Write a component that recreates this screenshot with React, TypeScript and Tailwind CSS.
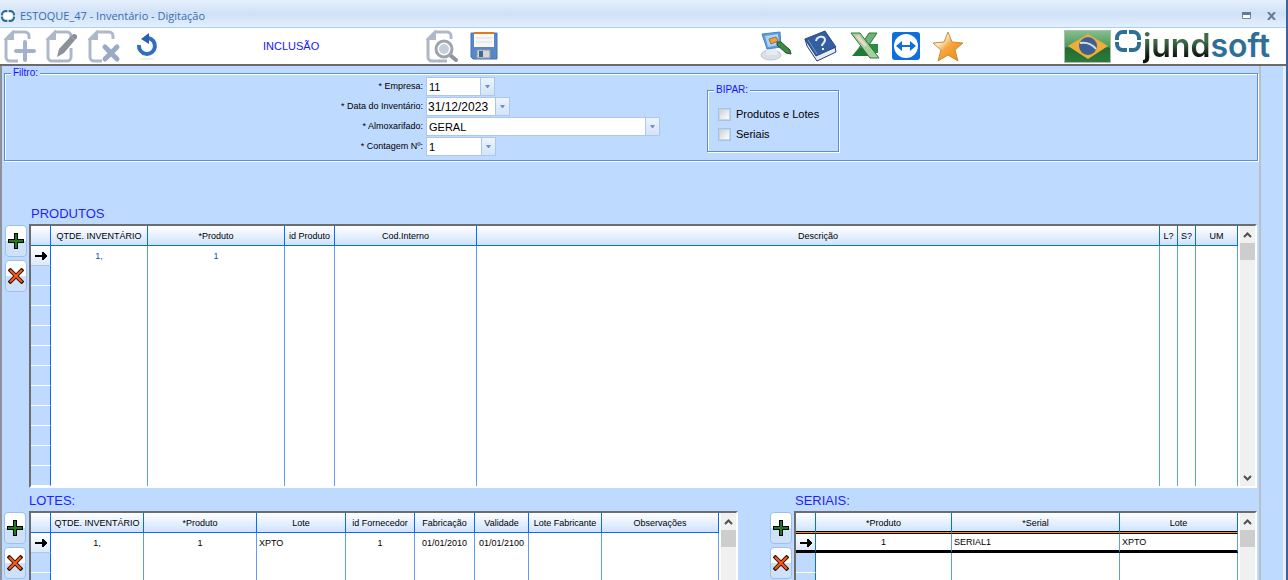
import React from "react";
import clsx from "clsx";

type Column = {
  label: string;
  width?: string;
};

type Cell = {
  text: string;
  align?: string;
};

const produtoColumns: Column[] = [
  { label: "QTDE. INVENTÁRIO", width: "w-[97px]" },
  { label: "*Produto", width: "w-[137px]" },
  { label: "id Produto", width: "w-[50px]" },
  { label: "Cod.Interno", width: "w-[142px]" },
  { label: "Descrição" },
  { label: "L?", width: "w-[18px]" },
  { label: "S?", width: "w-[18px]" },
  { label: "UM", width: "w-[42px]" },
];

const produtoRow: Cell[] = [
  { text: "1,", align: "text-center text-[#0a4fb4]" },
  { text: "1", align: "text-center text-[#0a4fb4]" },
  { text: "" },
  { text: "" },
  { text: "" },
  { text: "" },
  { text: "" },
  { text: "" },
];

const loteColumns: Column[] = [
  { label: "QTDE. INVENTÁRIO", width: "w-[93px]" },
  { label: "*Produto", width: "w-[113px]" },
  { label: "Lote", width: "w-[89px]" },
  { label: "id Fornecedor", width: "w-[69px]" },
  { label: "Fabricação", width: "w-[60px]" },
  { label: "Validade", width: "w-[54px]" },
  { label: "Lote Fabricante", width: "w-[73px]" },
  { label: "Observações" },
];

const loteRow: Cell[] = [
  { text: "1,", align: "text-center" },
  { text: "1", align: "text-center" },
  { text: "XPTO", align: "text-left pl-0.5" },
  { text: "1", align: "text-center" },
  { text: "01/01/2010", align: "text-center" },
  { text: "01/01/2100", align: "text-center" },
  { text: "" },
  { text: "" },
];

const serialColumns: Column[] = [
  { label: "*Produto", width: "w-[136px]" },
  { label: "*Serial", width: "w-[168px]" },
  { label: "Lote" },
];

const serialRow: Cell[] = [
  { text: "1", align: "text-center" },
  { text: "SERIAL1", align: "text-left pl-0.5" },
  { text: "XPTO", align: "text-left pl-0.5" },
];

/* ---------- Icons ---------- */

const PageShape = () => (
  <>
    <path d="M10 3h12a4 4 0 0 1 4 4v3M3 10v18a4 4 0 0 0 4 4h8" fill="none" stroke="#adb8ca" strokeWidth="3" />
    <path d="M11 1v10H1v-1l9-9z" fill="#adb8ca" />
  </>
);

const NewIcon = () => (
  <svg width="34" height="34" viewBox="0 0 34 34">
    <PageShape />
    <path d="M22 13v18M13 22h18" stroke="#a3b2ca" strokeWidth="4" strokeLinecap="round" />
  </svg>
);

const EditIcon = () => (
  <svg width="34" height="34" viewBox="0 0 34 34">
    <PageShape />
    <path d="M14 32h8a4 4 0 0 0 4-4v-9" fill="none" stroke="#adb8ca" strokeWidth="3" />
    <path d="M12 28l2-8L26 7l4 4-11 13z" fill="#8c9098" />
    <path d="M27 6c2-2 6-1 5 3l-2 2-4-4z" fill="#8c9098" />
  </svg>
);

const DeleteIcon = () => (
  <svg width="34" height="34" viewBox="0 0 34 34">
    <PageShape />
    <path d="M18 18l12 12M30 18L18 30" stroke="#9aaac4" strokeWidth="5" strokeLinecap="round" />
  </svg>
);

const UndoIcon = () => (
  <svg width="24" height="28" viewBox="0 0 24 28">
    <ellipse cx="12" cy="27" rx="8" ry="1" fill="#efefef" />
    <path d="M4 13a8 8 0 1 0 9-7" fill="none" stroke="#2f6fbe" strokeWidth="4" />
    <path d="M6 7l8-6v11z" fill="#2861ad" />
  </svg>
);

const SearchIcon = () => (
  <svg width="34" height="34" viewBox="0 0 34 34">
    <PageShape />
    <path d="M14 32h8" stroke="#adb8ca" strokeWidth="3" />
    <path d="M25 26l6 5" stroke="#8f959f" strokeWidth="4" strokeLinecap="round" />
    <circle cx="19" cy="20" r="8" fill="#fff" stroke="#9ea4ad" strokeWidth="3" />
    <circle cx="19" cy="20" r="5" fill="#c5ced9" />
  </svg>
);

const SaveIcon = () => (
  <svg width="28" height="28" viewBox="0 0 28 28">
    <path d="M1 1h26v26H3l-2-2z" fill="#5787c9" stroke="#4673b2" />
    <path d="M4 1h20v14H4z" fill="#f7f7f7" />
    <path d="M4 0h20v2H4z" fill="#e07a1c" />
    <path d="M6 6h16M6 10h16" stroke="#d8dde5" />
    <path d="M7 18h13v8H7z" fill="#d7d7cf" stroke="#8d9aa8" />
    <path d="M9 19h4v6H9z" fill="#3c67a2" />
  </svg>
);

const MonitorIcon = () => (
  <svg width="32" height="30" viewBox="0 0 32 30">
    <ellipse cx="11" cy="24" rx="10" ry="5" fill="#d9dfe6" stroke="#c0c7cf" />
    <path d="M7 17h9l2 7H6z" fill="#e6ebf0" />
    <path d="M2 3l18-2 1 15-14 2z" fill="#5a9be2" stroke="#4b82c6" />
    <path d="M5 5l13-2 1 11-11 2z" fill="#a9d3fa" />
    <path d="M9 8l7-2 2 4-7 3z" fill="#eda23a" stroke="#a5702c" />
    <path d="M17 11l4 0 9 8 1 4-5-1-9-8z" fill="#3d8a45" stroke="#1e5427" />
  </svg>
);

const BookIcon = () => (
  <svg width="34" height="32" viewBox="0 0 34 32">
    <path d="M1 9l11 16 19-8 1 5-19 9L3 16z" fill="#e7ebf2" stroke="#263f6e" />
    <path d="M1 9L21 1l11 16-20 9z" fill="#345f9f" stroke="#2a4c84" />
    <path d="M4 10l9 14" stroke="#7597cb" />
    <path d="M12 11c1-5 9-6 9-1 0 3-3 3-3 6M19 18v2" fill="none" stroke="#e6eefa" strokeWidth="2" />
  </svg>
);

const SheetIcon = () => (
  <svg width="30" height="28" viewBox="0 0 30 28">
    <path d="M12 12h6v12H2z" fill="#1f7a33" />
    <path d="M17 12h11v9H20z" fill="#2c8d3f" />
    <path d="M27 1h-8L9 16h8z" fill="#6fb277" stroke="#2b7a39" />
    <path d="M1 1h9l19 25h-9z" fill="#a7cfa2" stroke="#2b7a39" />
    <path d="M7 4l9 10" stroke="#efd9c6" strokeWidth="3" />
  </svg>
);

const RemoteIcon = () => (
  <svg width="28" height="28" viewBox="0 0 28 28">
    <rect width="28" height="28" rx="3" fill="#0e6fde" />
    <circle cx="14" cy="14" r="12" fill="#fff" />
    <path d="M4 14l6-5v4h8V9l6 5-6 5v-4h-8v4z" fill="#0e6fde" />
  </svg>
);

const StarIcon = () => (
  <svg width="32" height="31" viewBox="0 0 32 31">
    <defs>
      <linearGradient id="star" x1="0" y1="0" x2="1" y2="1">
        <stop offset="0.3" stopColor="#f4ead2" />
        <stop offset="0.5" stopColor="#f7a43a" />
        <stop offset="1" stopColor="#ef8412" />
      </linearGradient>
    </defs>
    <path d="M16 1l4 10 11 1-8 7 3 11-10-6-10 6 3-11-8-7 11-1z" fill="url(#star)" stroke="#c98d3b" />
  </svg>
);

const FlagIcon = () => (
  <svg width="47" height="33" viewBox="0 0 47 33">
    <defs>
      <linearGradient id="flag" x1="0" y1="0" x2="0" y2="1">
        <stop offset="0" stopColor="#86bf8f" />
        <stop offset="0.5" stopColor="#4d9a5b" />
        <stop offset="0.55" stopColor="#226c32" />
        <stop offset="1" stopColor="#2d7a3b" />
      </linearGradient>
    </defs>
    <rect x="0.5" y="0.5" width="46" height="32" fill="url(#flag)" stroke="#a9bcae" />
    <path d="M4 16L24 4l20 12-20 13z" fill="#f0ad3a" />
    <circle cx="24" cy="16" r="9" fill="#3d5f92" />
    <path d="M16 13c6-1 12 1 16 6" fill="none" stroke="#d4dcea" strokeWidth="2" />
  </svg>
);

const BrandMark = ({ className }: { className: string }) => (
  <svg className={className} viewBox="0 0 26 22">
    <path
      d="M12 2H8a6 6 0 0 0-6 6v2M14 2h4a6 6 0 0 1 6 6v2M2 12v2a6 6 0 0 0 6 6h4M24 12v2a6 6 0 0 1-6 6h-4"
      fill="none"
      stroke="#2f6f97"
      strokeWidth="4"
    />
  </svg>
);

const PlusIcon = () => (
  <svg width="16" height="16" viewBox="0 0 16 16" shapeRendering="crispEdges">
    <path d="M6 0h4v6h6v4h-6v6H6v-6H0V6h6z" fill="#000" />
    <path d="M7 1h2v6h6v2H9v6H7V9H1V7h6z" fill="#1d7a1d" />
  </svg>
);

const CrossIcon = () => (
  <svg width="16" height="16" viewBox="0 0 16 16">
    <path d="M1 1l14 14M15 1L1 15" stroke="#2a1408" strokeWidth="4" />
    <path d="M2 2l12 12M14 2L2 14" stroke="#ff5a14" strokeWidth="2" />
  </svg>
);

const RowArrow = () => (
  <svg className="mx-auto block" width="12" height="9" viewBox="0 0 12 9" shapeRendering="crispEdges">
    <path d="M0 4h9v2H0zM7 1h2v8H7zM9 2h1v6H9zM10 3h1v4h-1zM11 4h1v2h-1z" fill="#000" />
  </svg>
);

/* ---------- Building blocks ---------- */

const ToolButton = ({ label, children }: { label: string; children: React.ReactNode }) => (
  <button type="button" aria-label={label} className="flex shrink-0 items-center justify-center">
    {children}
  </button>
);

const DropArrow = () => (
  <svg width="5" height="3" viewBox="0 0 5 3">
    <path d="M0 0h5L3 3H2z" fill="#6d92c4" />
  </svg>
);

const fieldBox = "flex h-[19px] border border-[#abc7ec] bg-white";
const dropBox =
  "pointer-events-none flex w-[14px] shrink-0 items-center justify-center border-l border-[#abc7ec] bg-linear-to-b from-[#edf4fd] to-[#d3e3f8]";

const SelectField = ({ id, label, value, width }: { id: string; label: string; value: string; width: string }) => (
  <>
    <label htmlFor={id} className="text-right leading-[19px]">
      {label}
    </label>
    <div className={clsx(fieldBox, width)}>
      <select id={id} className="min-w-0 flex-1 appearance-none pl-0.5 text-[11px] leading-4">
        <option>{value}</option>
      </select>
      <span className={dropBox}>
        <DropArrow />
      </span>
    </div>
  </>
);

const SideButtons = () => (
  <div className="mt-px flex w-[22px] shrink-0 flex-col gap-[3px]">
    {["Adicionar", "Excluir"].map((label, i) => (
      <button
        key={label}
        type="button"
        aria-label={label}
        className="flex h-8 items-center justify-center rounded-sm border border-[#9dc0ee] bg-linear-to-b from-white from-50% to-[#cfe1f8] to-50%"
      >
        {i === 0 ? <PlusIcon /> : <CrossIcon />}
      </button>
    ))}
  </div>
);

const Chevron = ({ down }: { down?: boolean }) => (
  <svg width="9" height="6" viewBox="0 0 9 6" className={clsx(down && "rotate-180")}>
    <path d="M1 5l3.5-3.5L8 5" fill="none" stroke="#505050" strokeWidth="2" />
  </svg>
);

type GridProps = {
  columns: Column[];
  row: Cell[];
  emptyRows: number;
  headerClass?: string;
  rowClass?: string;
};

const DataGrid = ({
  columns,
  row,
  emptyRows,
  headerClass = "border-b-[#0a6cf0]",
  rowClass,
}: GridProps) => (
  <div className="flex min-w-0 flex-1 overflow-hidden border-2 border-t-[#6d6d6d] border-r-white border-b-white border-l-[#6d6d6d] bg-white">
    <table className="w-full table-fixed border-separate border-spacing-0 self-start">
      <thead>
        <tr className="h-5">
          <th
            className={clsx(
              "w-5 border-r border-b border-r-[#0a6cf0] bg-linear-to-b from-white to-[#cfe2fb] p-0",
              headerClass
            )}
          />
          {columns.map((col) => (
            <th
              key={col.label}
              className={clsx(
                "border-r border-b border-r-[#0a6cf0] bg-linear-to-b from-white to-[#cfe2fb] p-0 text-center font-normal whitespace-nowrap",
                col.width,
                headerClass
              )}
            >
              {col.label}
            </th>
          ))}
        </tr>
      </thead>
      <tbody>
        <tr className="h-5">
          <td
            className={clsx(
              "border-r border-r-[#0a6cf0] bg-linear-to-b from-white to-[#dbe9fc] p-0",
              rowClass ?? "border-b border-b-[#abc7ec]"
            )}
          >
            <RowArrow />
          </td>
          {row.map((cell, i) => (
            <td
              key={i}
              className={clsx("border-r border-r-[#5b9df5] p-0 whitespace-nowrap", cell.align, rowClass)}
            >
              {cell.text}
            </td>
          ))}
        </tr>
        {Array.from({ length: emptyRows }, (_, r) => (
          <tr key={r} className="h-5">
            <td className="border-r border-b border-r-[#0a6cf0] border-b-white bg-[#bfdaff] p-0" />
            {columns.map((col) => (
              <td key={col.label} className="border-r border-r-[#5b9df5] p-0" />
            ))}
          </tr>
        ))}
      </tbody>
    </table>
    <div className="ml-0.5 flex w-[15px] shrink-0 flex-col items-center bg-[#f0f0f0]">
      <span className="flex h-[17px] items-center">
        <Chevron />
      </span>
      <span className="h-[17px] w-full bg-[#cdcdcd]" />
      <span className="mt-auto flex h-[17px] items-center">
        <Chevron down />
      </span>
    </div>
  </div>
);

const groupBox = "border border-[#5b8fd0] shadow-[1px_1px_0_#fff,inset_1px_1px_0_#fff]";
const sectionTitle = "text-[13px] leading-[26px] text-[#1f1fff]";

const Filtro = () => (
  <fieldset className={clsx("mt-px mr-px ml-0.5 h-[94px] shrink-0 pl-[310px]", groupBox)}>
    <legend className="-ml-[304px] bg-[#bfdaff] px-0.5 text-[10px] leading-3 text-[#1414ff]">Filtro:</legend>
    <div className="-mt-0.5 flex items-start">
      <div className="grid grid-cols-[108px_auto] gap-x-[3px] gap-y-px">
        <SelectField id="empresa" label="* Empresa:" value="11" width="w-[69px]" />
        <label htmlFor="data" className="text-right leading-[19px]">
          * Data do Inventário:
        </label>
        <div className={clsx(fieldBox, "w-[84px]")}>
          <input id="data" defaultValue="31/12/2023" className="min-w-0 flex-1 pl-px text-xs leading-4" />
          <span className={dropBox}>
            <DropArrow />
          </span>
        </div>
        <SelectField id="almoxarifado" label="* Almoxarifado:" value="GERAL" width="w-[234px]" />
        <SelectField id="contagem" label="* Contagem Nº:" value="1" width="w-[70px]" />
      </div>
      <fieldset className={clsx("mt-[7px] ml-[47px] h-[68px] w-[132px] px-2.5 pt-2", groupBox)}>
        <legend className="-ml-1 bg-[#bfdaff] px-0.5 text-[10px] leading-3 text-[#1414ff]">BIPAR:</legend>
        {["Produtos e Lotes", "Seriais"].map((label) => (
          <label key={label} className="flex h-5 items-center gap-[5px] text-[11px]">
            <input
              type="checkbox"
              className="size-[13px] appearance-none border-2 border-[#c3d3e8] bg-linear-to-br from-[#cdd2d8] to-white outline outline-[#a9c2e4] -outline-offset-1"
            />
            {label}
          </label>
        ))}
      </fieldset>
    </div>
  </fieldset>
);

const App = () => {
  return (
    <div className="flex h-screen flex-col overflow-hidden border-r-2 border-[#3c62a4] bg-[#bfdaff] font-['Liberation_Sans',Arial,sans-serif] text-[9px] leading-4 text-black">
      {/* Title bar */}
      <header className="flex h-[28px] shrink-0 items-center border-b border-[#a9d0f5] bg-linear-to-b from-[#e6f0fc] via-[#cfe1f7] to-[#e3effd] pt-1 pr-2.5">
        <span className="ml-px bg-white">
          <BrandMark className="h-3 w-3.5" />
        </span>
        <h1 className="ml-[5px] font-['Open_Sans',sans-serif] text-[11px] text-[#3a6cab]">
          ESTOQUE_47 - Inventário - Digitação
        </h1>
        <button type="button" aria-label="Restaurar" className="ml-auto">
          <svg width="9" height="8" viewBox="0 0 9 8">
            <path d="M0.5 0.5h8v6h-8z" fill="#fff" stroke="#6d87a8" />
            <path d="M0 0h9v3H0z" fill="#5f7a9e" />
          </svg>
        </button>
        <button type="button" aria-label="Fechar" className="ml-4">
          <svg width="9" height="8" viewBox="0 0 9 8">
            <path d="M1 0l7 8M8 0L1 8" stroke="#66799a" strokeWidth="2" />
          </svg>
        </button>
      </header>

      {/* Toolbar */}
      <div className="flex h-[38px] shrink-0 items-center border-b-2 border-[#6d6a6c] bg-white pl-[3px]">
        <div className="flex items-center gap-2">
          <ToolButton label="Novo"><NewIcon /></ToolButton>
          <ToolButton label="Editar"><EditIcon /></ToolButton>
          <ToolButton label="Excluir registro"><DeleteIcon /></ToolButton>
        </div>
        <div className="ml-3.5">
          <ToolButton label="Desfazer"><UndoIcon /></ToolButton>
        </div>
        <span className="ml-[104px] w-[162px] text-[11px] text-[#1414ff]">INCLUSÃO</span>
        <div className="flex items-center gap-[11px]">
          <ToolButton label="Pesquisar"><SearchIcon /></ToolButton>
          <ToolButton label="Salvar"><SaveIcon /></ToolButton>
        </div>
        <div className="ml-auto flex items-center gap-3">
          <ToolButton label="Aparência"><MonitorIcon /></ToolButton>
          <ToolButton label="Ajuda"><BookIcon /></ToolButton>
          <ToolButton label="Exportar planilha"><SheetIcon /></ToolButton>
          <ToolButton label="Acesso remoto"><RemoteIcon /></ToolButton>
          <ToolButton label="Favoritos"><StarIcon /></ToolButton>
        </div>
        <div className="ml-[100px] flex items-center pr-4">
          <FlagIcon />
          <span className="ml-1 self-start">
            <BrandMark className="h-[22px] w-[26px]" />
          </span>
          <span className="ml-0.5 font-['Inter',sans-serif] text-[32px] leading-8 font-semibold">
            <span className="bg-linear-to-b from-[#3f6b48] from-40% to-[#0b130c] to-80% bg-clip-text text-transparent">jund</span>
            <span className="text-[#2f6f97]">soft</span>
          </span>
        </div>
      </div>

      {/* Workspace */}
      <div className="flex min-h-0 flex-1 border-l-2 border-[#8d9299]">
        <main className="flex min-w-0 flex-1 flex-col">
          <Filtro />

          <section className="mt-10 shrink-0 pr-0.5 pl-[3px]">
            <h2 className={clsx("ml-[26px] h-[23px]", sectionTitle)}>PRODUTOS</h2>
            <div className="flex h-[264px] gap-0.5">
              <SideButtons />
              <DataGrid columns={produtoColumns} row={produtoRow} emptyRows={11} />
            </div>
          </section>

          <div className="flex min-h-0 flex-1 overflow-hidden pr-0.5 pl-0.5">
            <section className="min-w-0 flex-[734]">
              <h2 className={clsx("ml-[25px] h-[23px]", sectionTitle)}>LOTES:</h2>
              <div className="flex h-44 gap-[3px]">
                <SideButtons />
                <DataGrid columns={loteColumns} row={loteRow} emptyRows={6} />
              </div>
            </section>
            <section className="ml-8 min-w-0 flex-[487]">
              <h2 className={clsx("ml-[25px] h-[23px]", sectionTitle)}>SERIAIS:</h2>
              <div className="flex h-44 gap-0.5">
                <SideButtons />
                <DataGrid
                  columns={serialColumns}
                  row={serialRow}
                  emptyRows={6}
                  headerClass="border-b-[#ff8a1c] shadow-[inset_0_-1px_0_#000]"
                  rowClass="border-t border-b-3 border-t-black border-b-black"
                />
              </div>
            </section>
          </div>
        </main>
        <aside className="w-[27px] shrink-0 border-r-3 border-l-2 border-r-[#e3efff] border-l-[#b9bfc7]" />
      </div>
    </div>
  );
};

export default App;
